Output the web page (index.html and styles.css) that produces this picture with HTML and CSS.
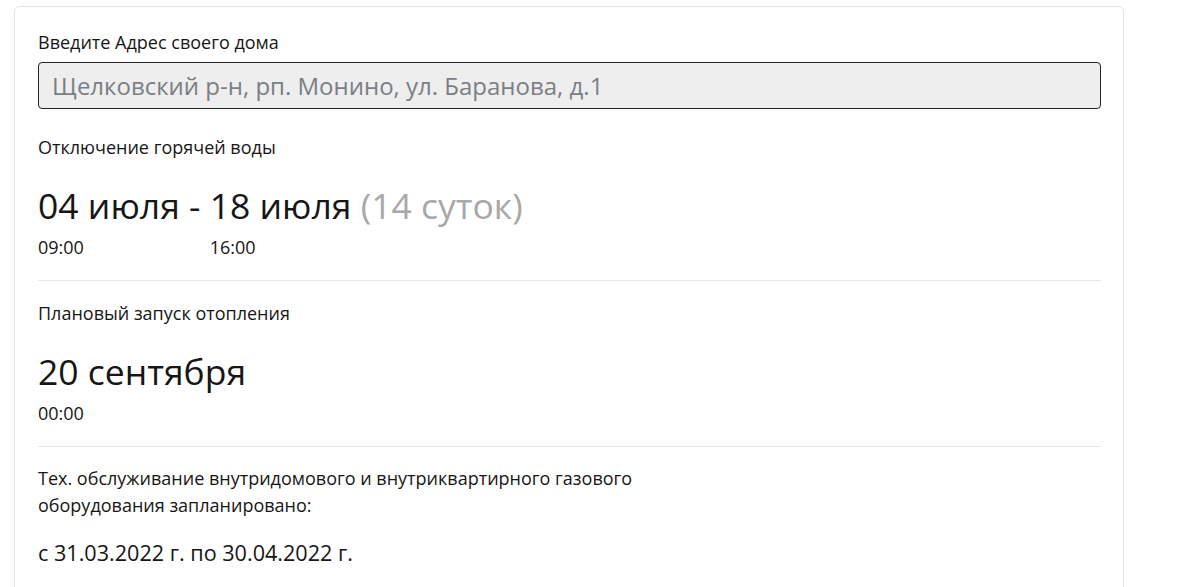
FILE: index.html
```html
<!DOCTYPE html>
<html lang="ru">
<head>
<meta charset="utf-8">
<link rel="stylesheet" href="styles.css">
</head>
<body>
<div class="card">
  <div class="label">Введите Адрес своего дома</div>
  <input class="address" type="text" placeholder="Щелковский р-н, рп. Монино, ул. Баранова, д.1">

  <section class="block">
    <div class="title">Отключение горячей воды</div>
    <div class="range">
      <div class="col">
        <div class="big">04 июля -&nbsp;</div>
        <div class="time">09:00</div>
      </div>
      <div class="col">
        <div class="big">18 июля <span class="muted">(14 суток)</span></div>
        <div class="time">16:00</div>
      </div>
    </div>
  </section>

  <section class="block">
    <div class="title">Плановый запуск отопления</div>
    <div class="range">
      <div class="col">
        <div class="big">20 сентября</div>
        <div class="time">00:00</div>
      </div>
    </div>
  </section>

  <section class="block last">
    <div class="title wrap">Тех. обслуживание внутридомового и внутриквартирного газового оборудования запланировано:</div>
    <div class="period">с 31.03.2022 г. по 30.04.2022 г.</div>
  </section>
</div>
</body>
</html>
```

FILE: styles.css
```css
html, body {
  margin: 0;
  padding: 0;
  background: #fff;
}
body {
  font-family: "Open Sans", "Noto Sans", sans-serif;
  color: #161616;
  font-size: 18px;
  line-height: 24px;
}
.card {
  margin: 6px 0 0 14px;
  width: 1110px;
  box-sizing: border-box;
  border: 1px solid #e2e2e2;
  border-radius: 5px;
  padding: 23px 22px 24px 23px;
}
.label {
  font-size: 18px;
  line-height: 24px;
}
.address {
  display: block;
  width: 100%;
  box-sizing: border-box;
  margin-top: 8px;
  height: 47px;
  border: 1.5px solid #222;
  border-radius: 4px;
  background: #eeeeee;
  padding: 0 13px;
  font-family: "Open Sans", "Noto Sans", sans-serif;
  font-size: 24px;
  color: #333;
}
.address::placeholder {
  color: #7b7f84;
}
.block {
  padding: 26px 0 21px;
  border-bottom: 1px solid #e6e6e6;
}
.block + .block {
  padding-top: 20px;
}
.block.last {
  border-bottom: none;
  padding-top: 18px;
  padding-bottom: 0;
}
.title {
  font-size: 18px;
  line-height: 24px;
}
.title.wrap {
  max-width: 640px;
  line-height: 27px;
}
.range {
  display: flex;
  margin-top: 27px;
}
.col {
  display: flex;
  flex-direction: column;
}
.big {
  font-size: 35.5px;
  line-height: 38px;
  white-space: pre;
}
.muted {
  color: #a8a8a8;
}
.time {
  margin-top: 11px;
  font-size: 18px;
  line-height: 24px;
}
.period {
  margin-top: 19px;
  font-size: 21.6px;
  line-height: 30px;
}
```
